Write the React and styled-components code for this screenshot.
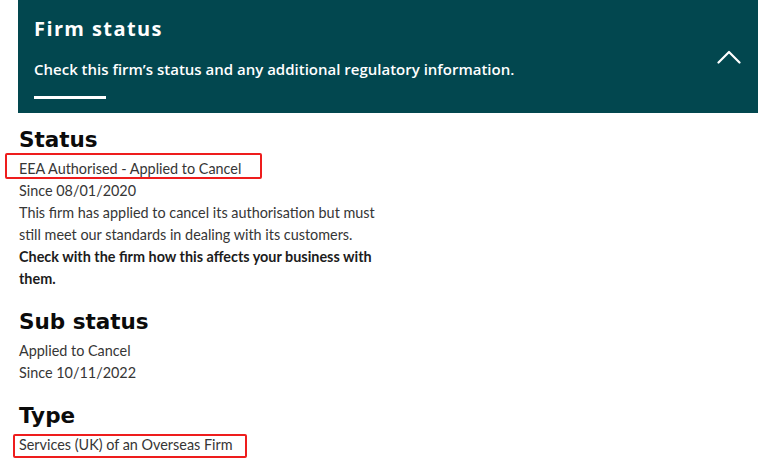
import React from "react";
import styled, { createGlobalStyle } from "styled-components";

const Global = createGlobalStyle`
  html, body { margin: 0; padding: 0; background: #ffffff; }
  body { font-family: Lato, "Liberation Sans", sans-serif; }
`;

const Page = styled.div`
  width: 782px;
  height: 469px;
  overflow: hidden;
  background: #fff;
`;

const Banner = styled.header`
  margin: 0 24px 0 18px;
  height: 113px;
  background: #02474f;
  display: flex;
  align-items: center;
  justify-content: space-between;
  padding: 0 17px 0 16px;
  box-sizing: border-box;
`;

const BannerText = styled.div`
  display: flex;
  flex-direction: column;
  align-self: stretch;
  padding-top: 17px;
`;

const BannerTitle = styled.h2`
  margin: 0;
  font-family: "Open Sans", sans-serif;
  font-weight: 700;
  font-size: 20px;
  line-height: 24px;
  letter-spacing: 1.4px;
  color: #fff;
`;

const BannerSub = styled.p`
  margin: 19px 0 0;
  font-family: "Open Sans", sans-serif;
  font-weight: 600;
  font-size: 15px;
  line-height: 18px;
  color: #fff;
`;

const Bar = styled.span`
  display: block;
  width: 72px;
  height: 3px;
  background: #fff;
  margin-top: 18px;
`;

const Toggle = styled.button`
  border: 0;
  background: transparent;
  padding: 0;
  width: 24px;
  height: 14px;
  display: flex;
  cursor: pointer;
`;

const Content = styled.main`
  padding: 13px 0 0 19px;
  width: 364px;
`;

const Heading = styled.h3`
  margin: ${(p) => (p.$first ? "0" : "18px")} 0 4px;
  font-family: "DejaVu Sans", sans-serif;
  font-weight: 700;
  font-size: 21.5px;
  line-height: 28px;
  color: #0b0b0b;
`;

const Line = styled.p`
  margin: 0;
  font-size: 14.4px;
  line-height: 22px;
  color: #363636;
  font-weight: ${(p) => (p.$bold ? 700 : 400)};
  ${(p) => p.$bold && "color: #1c1c1c;"}
`;

const Marked = styled.span`
  position: relative;
  display: inline-block;
  &::after {
    content: "";
    position: absolute;
    left: ${(p) => p.$l}px;
    right: ${(p) => p.$r}px;
    top: ${(p) => p.$t}px;
    bottom: ${(p) => p.$b}px;
    border: 2.5px solid #ee1d1d;
    border-radius: 2px;
    pointer-events: none;
  }
`;

function Chevron() {
  return (
    <svg width="24" height="14" viewBox="0 0 24 14" fill="none">
      <path d="M1.5 12.5 L12 2 L22.5 12.5" stroke="#fff" strokeWidth="2.2" strokeLinecap="round" strokeLinejoin="round" />
    </svg>
  );
}

export default function App() {
  return (
    <Page>
      <Global />
      <Banner>
        <BannerText>
          <BannerTitle>Firm status</BannerTitle>
          <BannerSub>Check this firm’s status and any additional regulatory information.</BannerSub>
          <Bar />
        </BannerText>
        <Toggle aria-label="Collapse">
          <Chevron />
        </Toggle>
      </Banner>
      <Content>
        <Heading $first>Status</Heading>
        <Line>
          <Marked $l={-14} $r={-21} $t={-5} $b={1}>EEA Authorised - Applied to Cancel</Marked>
        </Line>
        <Line>Since 08/01/2020</Line>
        <Line>This firm has applied to cancel its authorisation but must still meet our standards in dealing with its customers.</Line>
        <Line $bold>Check with the firm how this affects your business with them.</Line>
        <Heading>Sub status</Heading>
        <Line>Applied to Cancel</Line>
        <Line>Since 10/11/2022</Line>
        <Heading>Type</Heading>
        <Line>
          <Marked $l={-6} $r={-14} $t={0} $b={-2}>Services (UK) of an Overseas Firm</Marked>
        </Line>
      </Content>
    </Page>
  );
}
